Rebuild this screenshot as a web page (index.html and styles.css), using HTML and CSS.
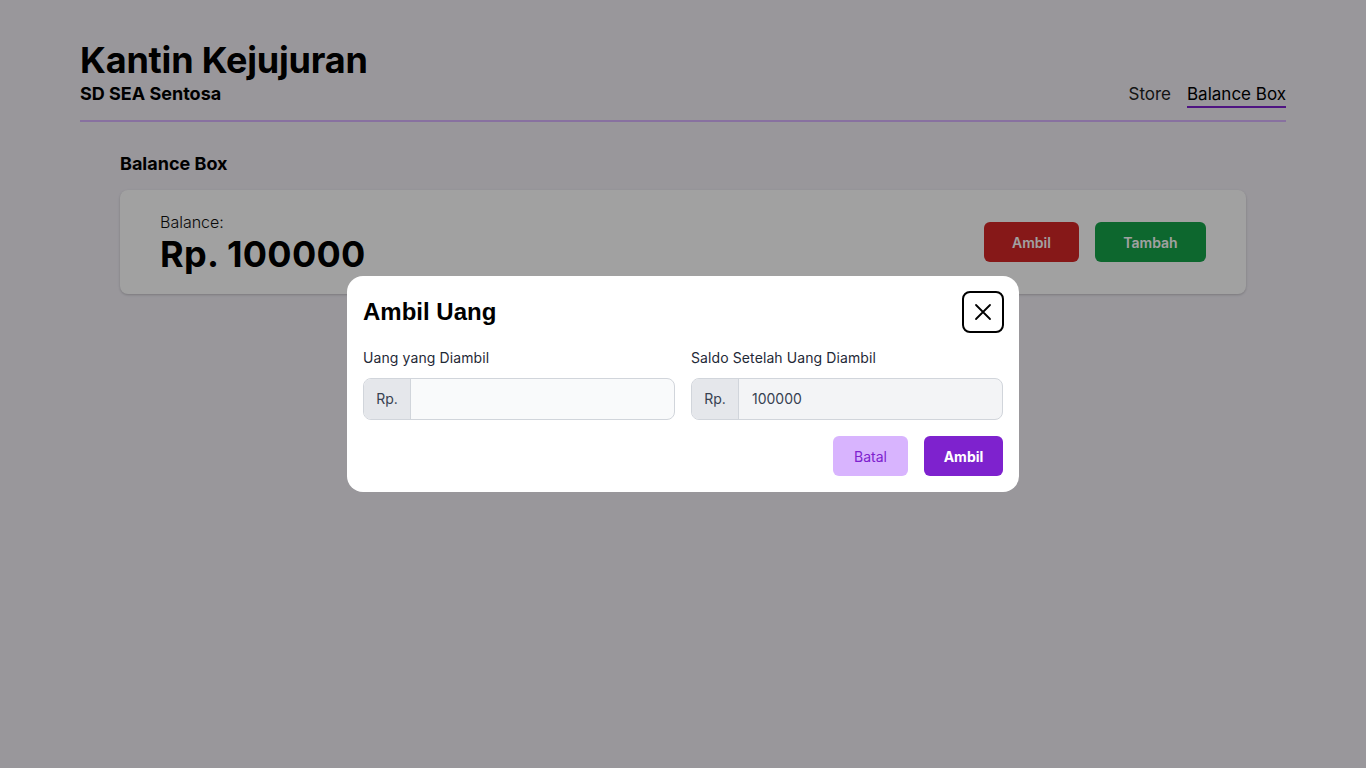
FILE: index.html
```html
<!DOCTYPE html>
<html lang="id">
<head>
<meta charset="utf-8">
<title>Kantin Kejujuran</title>
<link rel="stylesheet" href="styles.css">
</head>
<body>
<div class="page">
  <header class="topbar">
    <div class="brand">
      <h1 class="brand-title">Kantin Kejujuran</h1>
      <div class="brand-sub">SD SEA Sentosa</div>
    </div>
    <nav class="nav">
      <a class="nav-link">Store</a>
      <a class="nav-link active">Balance Box</a>
    </nav>
  </header>
  <main class="content">
    <h2 class="section-title">Balance Box</h2>
    <section class="balance-card">
      <div class="balance-info">
        <div class="balance-label">Balance:</div>
        <div class="balance-value">Rp. 100000</div>
      </div>
      <div class="balance-actions">
        <button class="btn btn-red">Ambil</button>
        <button class="btn btn-green">Tambah</button>
      </div>
    </section>
  </main>
</div>
<div class="overlay">
  <div class="modal">
    <div class="modal-head">
      <h3 class="modal-title">Ambil Uang</h3>
      <button class="close-btn" aria-label="Tutup">
        <svg width="18" height="18" viewBox="0 0 18 18" fill="none" stroke="#000" stroke-width="1.8" stroke-linecap="round"><path d="M2 2L16 16M16 2L2 16"/></svg>
      </button>
    </div>
    <div class="fields">
      <div class="field">
        <label class="field-label">Uang yang Diambil</label>
        <div class="input-group">
          <span class="addon">Rp.</span>
          <input class="input" type="text" value="">
        </div>
      </div>
      <div class="field">
        <label class="field-label">Saldo Setelah Uang Diambil</label>
        <div class="input-group disabled">
          <span class="addon">Rp.</span>
          <input class="input" type="text" value="100000" disabled>
        </div>
      </div>
    </div>
    <div class="modal-actions">
      <button class="mbtn mbtn-light">Batal</button>
      <button class="mbtn mbtn-dark">Ambil</button>
    </div>
  </div>
</div>
</body>
</html>
```

FILE: styles.css
```css
* { box-sizing: border-box; }
html, body { margin: 0; padding: 0; }
body {
  font-family: Inter, "Noto Sans", sans-serif;
  background: #f2eff6;
  color: #000;
  height: 768px;
  overflow: hidden;
}
.page { padding: 0 80px; }
.topbar {
  display: flex;
  justify-content: space-between;
  align-items: flex-end;
  padding-top: 40px;
  padding-bottom: 12px;
  border-bottom: 2px solid #d8b4fe;
}
.brand-title {
  margin: 0;
  font-size: 36px;
  line-height: 40px;
  font-weight: 700;
  letter-spacing: -0.2px;
}
.brand-sub {
  font-size: 18px;
  line-height: 28px;
  font-weight: 700;
}
.nav { display: flex; gap: 16px; }
.nav-link {
  font-size: 17px;
  line-height: 24px;
  color: #222;
  border-bottom: 2px solid transparent;
}
.nav-link.active { border-bottom-color: #7e22ce; color: #000; }
.content { padding: 30px 40px 0; }
.section-title {
  margin: 0 0 14px;
  font-size: 18px;
  line-height: 24px;
  font-weight: 700;
}
.balance-card {
  background: #fff;
  border-radius: 8px;
  box-shadow: 0 1px 3px rgba(0,0,0,0.12), 0 1px 2px rgba(0,0,0,0.08);
  display: flex;
  justify-content: space-between;
  align-items: center;
  padding: 22px 40px 22px;
  height: 104px;
}
.balance-info { align-self: flex-start; }
.balance-label { font-size: 16px; line-height: 20px; color: #111; font-weight: 300; }
.balance-value { font-size: 36px; line-height: 40px; font-weight: 700; letter-spacing: 0.3px; margin-top: 2px; }
.balance-actions { display: flex; gap: 16px; align-self: flex-start; margin-top: 10px; }
.btn {
  border: 0;
  border-radius: 6px;
  height: 40px;
  font-family: Inter, sans-serif;
  font-size: 14px;
  font-weight: 600;
  color: #fff;
}
.btn-red { background: #d42626; width: 95px; }
.btn-green { background: #16a34a; width: 111px; }

.overlay {
  position: fixed;
  inset: 0;
  background: rgba(0,0,0,0.37);
  display: flex;
  align-items: center;
  justify-content: center;
}
.modal {
  width: 672px;
  background: #fff;
  border-radius: 16px;
  padding: 16px;
}
.modal-head {
  display: flex;
  justify-content: space-between;
  align-items: center;
  height: 42px;
  margin-top: -1px;
  margin-bottom: 15px;
}
.modal-title {
  margin: 0;
  font-family: "Liberation Sans", Arial, sans-serif;
  font-size: 24px;
  font-weight: 700;
}
.close-btn {
  width: 42px;
  height: 42px;
  border: 2px solid #000;
  border-radius: 8px;
  background: #fff;
  display: flex;
  align-items: center;
  justify-content: center;
  padding: 0;
  margin-right: -1px;
}
.fields { display: grid; grid-template-columns: 1fr 1fr; gap: 16px; }
.field { display: flex; flex-direction: column; gap: 10px; }
.field-label { font-size: 14px; line-height: 20px; color: #1f2937; font-weight: 400; letter-spacing: 0.1px; }
.input-group {
  display: flex;
  height: 42px;
  border: 1px solid #d1d5db;
  border-radius: 8px;
  overflow: hidden;
  background: #f9fafb;
}
.input-group.disabled { background: #f3f4f6; }
.addon {
  width: 47px;
  flex: none;
  background: #e5e7eb;
  border-right: 1px solid #d1d5db;
  display: flex;
  align-items: center;
  justify-content: center;
  font-size: 14px;
  color: #374151;
  padding-bottom: 1px;
}
.input {
  flex: 1;
  min-width: 0;
  border: 0;
  background: transparent;
  padding: 0 13px 1px;
  font-family: Inter, sans-serif;
  font-size: 14px;
  color: #374151;
  outline: none;
}
.input:disabled { color: #374151; }
.modal-actions { display: flex; justify-content: flex-end; gap: 16px; margin-top: 16px; }
.mbtn {
  height: 40px;
  border: 0;
  border-radius: 6px;
  font-family: Inter, sans-serif;
  font-size: 14px;
}
.mbtn-light { width: 75px; background: #d8b4fe; color: #7e22ce; font-weight: 400; }
.mbtn-dark { width: 79px; background: #7e22ce; color: #fff; font-weight: 700; }
```
